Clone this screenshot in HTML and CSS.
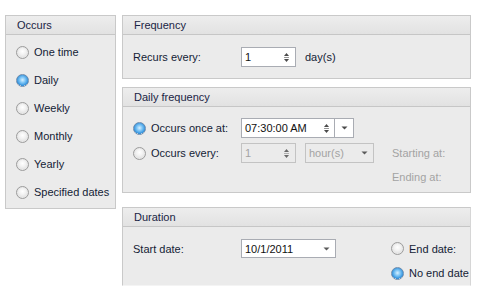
FILE: index.html
```html
<!DOCTYPE html>
<html>
<head>
<meta charset="utf-8">
<link rel="stylesheet" href="styles.css">
</head>
<body>
<div class="page">
  <div class="panel occurs">
    <div class="hdr">Occurs</div>
    <div class="occ-body">
      <div class="occ-row"><span class="radio"></span><span>One time</span></div>
      <div class="occ-row"><span class="radio on"></span><span>Daily</span></div>
      <div class="occ-row"><span class="radio"></span><span>Weekly</span></div>
      <div class="occ-row"><span class="radio"></span><span>Monthly</span></div>
      <div class="occ-row"><span class="radio"></span><span>Yearly</span></div>
      <div class="occ-row"><span class="radio"></span><span>Specified dates</span></div>
    </div>
  </div>
  <div class="right">
    <div class="panel freq">
      <div class="hdr hdr-r">Frequency</div>
      <div class="body freq-body">
        <div class="row">
          <span class="lbl">Recurs every:</span>
          <div class="box spin w55"><span class="val">1</span><svg class="arrows" width="7" height="11" viewBox="0 0 7 11"><path d="M3.5 1 L6 4 L1 4 Z" fill="#4a4a4a"/><rect x="1" y="5" width="5" height="1" fill="#9a9a9a"/><path d="M1 7 L6 7 L3.5 10 Z" fill="#4a4a4a"/></svg></div>
          <span class="unit">day(s)</span>
        </div>
      </div>
    </div>
    <div class="panel daily">
      <div class="hdr hdr-r">Daily frequency</div>
      <div class="body daily-body">
        <div class="row r1">
          <span class="lbl rl"><span class="radio on"></span>Occurs once at:</span>
          <div class="box spin time"><span class="val">07:30:00 AM</span><svg class="arrows" width="7" height="11" viewBox="0 0 7 11"><path d="M3.5 1 L6 4 L1 4 Z" fill="#4a4a4a"/><rect x="1" y="5" width="5" height="1" fill="#9a9a9a"/><path d="M1 7 L6 7 L3.5 10 Z" fill="#4a4a4a"/></svg><span class="ddbtn"><svg width="7" height="4" viewBox="0 0 7 4"><path d="M0.5 0.5 L6.5 0.5 L3.5 3.5 Z" fill="#4a4a4a"/></svg></span></div>
        </div>
        <div class="row r2">
          <span class="lbl rl"><span class="radio"></span>Occurs every:</span>
          <div class="box spin w55 dis"><span class="val">1</span><svg class="arrows" width="7" height="11" viewBox="0 0 7 11"><path d="M3.5 1 L6 4 L1 4 Z" fill="#6a6a6a"/><rect x="1" y="5" width="5" height="1" fill="#b0b0b0"/><path d="M1 7 L6 7 L3.5 10 Z" fill="#6a6a6a"/></svg></div>
          <div class="box combo hour dis"><span class="val">hour(s)</span><svg class="dd" width="7" height="4" viewBox="0 0 7 4"><path d="M0.5 0.5 L6.5 0.5 L3.5 3.5 Z" fill="#5a5a5a"/></svg></div>
          <span class="dlbl">Starting at:</span>
        </div>
        <div class="row r3">
          <span class="dlbl end">Ending at:</span>
        </div>
      </div>
    </div>
    <div class="panel dur">
      <div class="hdr hdr-r">Duration</div>
      <div class="body dur-body">
        <div class="row d1">
          <span class="lbl">Start date:</span>
          <div class="box combo date"><span class="val">10/1/2011</span><svg class="dd" width="7" height="4" viewBox="0 0 7 4"><path d="M0.5 0.5 L6.5 0.5 L3.5 3.5 Z" fill="#5a5a5a"/></svg></div>
          <span class="rad-lbl"><span class="radio"></span>End date:</span>
        </div>
        <div class="row d2">
          <span class="rad-lbl"><span class="radio on"></span>No end date</span>
        </div>
      </div>
    </div>
  </div>
</div>
</body>
</html>
```

FILE: styles.css
```css
html, body {
  margin: 0;
  padding: 0;
  background: #ffffff;
}
body {
  font-family: "Liberation Sans", Arial, sans-serif;
  font-size: 11px;
  color: #141c36;
  width: 478px;
  height: 292px;
  overflow: hidden;
}
.page {
  display: flex;
  align-items: flex-start;
  gap: 6px;
  padding: 15px 0 0 5px;
}
.panel {
  background: #ebebeb;
  border: 1px solid #c9c9c9;
  box-sizing: border-box;
}
.hdr {
  height: 18px;
  line-height: 18px;
  border-bottom: 1px solid #c6c6c6;
  background: linear-gradient(#ededed, #e2e2e2);
  padding-left: 11px;
  color: #1a2444;
}
.hdr-r { padding-left: 11px; }
.occurs {
  width: 111px;
  height: 194px;
}
.occ-body {
  padding-top: 3px;
}
.occ-row {
  height: 28px;
  display: flex;
  align-items: center;
  padding-left: 10px;
  gap: 5px;
}
.radio {
  display: inline-block;
  width: 11px;
  height: 11px;
  border-radius: 50%;
  border: 1px solid #9c9c9c;
  background: radial-gradient(circle at 50% 40%, #ffffff 0%, #f1f1f1 40%, #d2d2d2 100%);
  box-shadow: inset 0 0 0 1px #e8e8e8;
  flex: none;
}
.radio.on {
  border-color: #6d8cad;
  background: radial-gradient(circle at 50% 45%, #d7f0ff 0%, #7cc4f5 35%, #2f8fdb 70%, #dbe9f4 72%, #f4f8fb 100%);
  box-shadow: none;
}
.right {
  width: 349px;
  display: flex;
  flex-direction: column;
}
.freq { height: 64px; }
.daily { height: 106px; margin-top: 8px; }
.dur { height: 79px; margin-top: 14px; border-right-color: #d6d6d6; border-bottom-color: #f4f4f4; }
.body {
  padding-left: 10px;
}
.row {
  display: flex;
  align-items: center;
}
.lbl {
  width: 108px;
  flex: none;
}
.rl {
  display: flex;
  align-items: center;
  gap: 5px;
}
.freq-body { padding-top: 12px; }
.box {
  height: 20px;
  box-sizing: border-box;
  background: #ffffff;
  border: 1px solid #a9acb3;
  display: flex;
  align-items: center;
  position: relative;
  color: #111111;
}
.box .val {
  padding-left: 3px;
  flex: 1;
}
.w55 { width: 55px; }
.arrows { margin-right: 5px; }
.unit { margin-left: 9px; }
.time { width: 113px; }
.time .arrows { margin-right: 4px; }
.ddbtn {
  width: 18px;
  height: 18px;
  border-left: 1px solid #a9acb3;
  display: flex;
  align-items: center;
  justify-content: center;
}
.daily-body { padding-top: 11px; }
.r1 { height: 20px; }
.r2 { height: 20px; margin-top: 5px; }
.r3 { height: 14px; margin-top: 7px; }
.dis {
  background: #ebebeb;
  border-color: #c3c3c3;
  color: #a3a3a3;
}
.hour {
  width: 69px;
  margin-left: 9px;
}
.combo .dd { margin-right: 5px; }
.dlbl {
  color: #a3a3a3;
  margin-left: 18px;
}
.dlbl.end { margin-left: 259px; }
.dur-body { padding-top: 12px; }
.d1 { height: 19px; }
.date {
  width: 95px;
  height: 19px;
}
.rad-lbl {
  display: flex;
  align-items: center;
  gap: 5px;
  margin-left: 55px;
}
.d2 { height: 14px; margin-top: 8px; }
.d2 .rad-lbl { margin-left: 258px; }
```
